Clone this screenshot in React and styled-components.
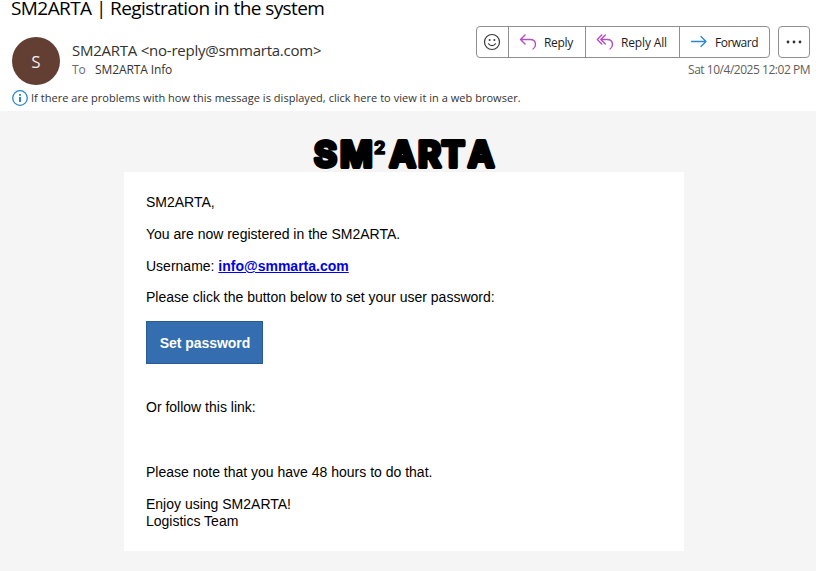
import React from "react";
import styled, { createGlobalStyle } from "styled-components";

const GlobalStyle = createGlobalStyle`
  * { box-sizing: border-box; }
  body { margin: 0; background: #fff; }
`;

const Window = styled.div`
  display: flex;
  flex-direction: column;
  width: 816px;
  height: 571px;
  font-family: "Open Sans", "Noto Sans", sans-serif;
  color: #333231;
  background: #fff;
`;

const Subject = styled.h1`
  margin: 0;
  height: 26px;
  padding-left: 11px;
  font-size: 19px;
  font-weight: 400;
  line-height: 16px;
  letter-spacing: -0.58px;
  white-space: nowrap;
  color: #000;
`;

const Header = styled.header`
  display: flex;
  height: 62px;
  padding: 0 6px 0 12px;
`;

const Avatar = styled.div`
  display: flex;
  align-items: center;
  justify-content: center;
  width: 48px;
  height: 48px;
  margin-top: 11px;
  border-radius: 50%;
  background: #633e32;
  color: #f1ecea;
  font-size: 17px;
  font-weight: 400;
`;

const Addresses = styled.div`
  flex: 1;
  padding: 14px 0 0 12px;
`;

const Sender = styled.div`
  font-size: 15px;
  line-height: 21px;
  letter-spacing: -0.24px;
  white-space: nowrap;
`;

const Recipient = styled.div`
  display: flex;
  gap: 9.5px;
  font-size: 12px;
  line-height: 18px;
  letter-spacing: -0.12px;
`;

const Muted = styled.span`
  color: #6b6a69;
`;

const HeaderEnd = styled.div`
  display: flex;
  flex-direction: column;
  align-items: flex-end;
`;

const Toolbar = styled.div`
  display: flex;
  gap: 8px;
`;

const ButtonGroup = styled.div`
  display: flex;
  width: ${(p) => p.$width}px;
  height: 32px;
  border: 1px solid #8f8f8f;
  border-radius: 4px;
  background: #fff;
`;

const ToolButton = styled.button`
  display: flex;
  align-items: center;
  gap: ${(p) => p.$gap || 0}px;
  width: ${(p) => p.$width}px;
  padding: 0 0 0 ${(p) => p.$inset}px;
  border: 0;
  background: none;
  color: #1c1c1c;
  font: 400 12px "Open Sans", "Noto Sans", sans-serif;
  letter-spacing: ${(p) => p.$tracking || 0}px;
  white-space: nowrap;
  & + & { border-left: 1px solid #8f8f8f; }
  svg { flex: none; }
`;

const SentDate = styled.time`
  margin-top: 3px;
  font-size: 12px;
  line-height: 18px;
  letter-spacing: -0.47px;
  color: #5f5e5d;
`;

const InfoBar = styled.div`
  display: flex;
  align-items: center;
  gap: 3px;
  height: 23px;
  padding: 0 0 3px 12px;
  font-size: 11px;
  letter-spacing: 0.03px;
  white-space: nowrap;
`;

const InfoText = styled.span`
  padding-bottom: 2px;
`;

const Message = styled.main`
  flex: 1;
  display: flex;
  flex-direction: column;
  align-items: center;
  padding: 26px 8px 0 0;
  background: #f5f5f5;
  font-family: "Liberation Sans", Arial, sans-serif;
  font-size: 14px;
  line-height: 17px;
  color: #000;
`;

const Logo = styled.svg`
  display: block;
  flex: none;
  overflow: visible;
  font-family: Inter, sans-serif;
  font-weight: 700;
`;

const Card = styled.section`
  width: 560px;
  height: 379px;
  padding: 22px;
  background: #fff;
`;

const Paragraph = styled.p`
  margin: 0 0 ${(p) => p.$after ?? 15}px;
`;

const MailLink = styled.a`
  font-weight: 700;
  color: #0000ee;
`;

const PasswordButton = styled.a`
  display: flex;
  align-items: center;
  justify-content: center;
  width: 117px;
  height: 43px;
  margin-bottom: 35px;
  padding: 2px 0 0 1px;
  border: 1px solid #2a5a98;
  background: #346db0;
  color: #fff;
  font-weight: 700;
  letter-spacing: -0.06px;
  text-decoration: none;
`;

const Smile = () => (
  <svg width="18" height="18" viewBox="0 0 18 18" fill="none" stroke="#3a3a3a" strokeWidth="1.2">
    <circle cx="9" cy="9" r="7.5" />
    <path d="M5.5 10.8c1.5 2.4 5.5 2.4 7 0" strokeLinecap="round" />
    <circle cx="6.6" cy="7" r="1" fill="#3a3a3a" stroke="none" />
    <circle cx="11.4" cy="7" r="1" fill="#3a3a3a" stroke="none" />
  </svg>
);

const ReplyIcon = () => (
  <svg width="18" height="18" viewBox="0 0 18 18" fill="none" stroke="#b14fc0" strokeWidth="1.4" strokeLinecap="round" strokeLinejoin="round">
    <path d="M6 2L1.5 6.5L6 11M1.5 6.5H11C14.4 6.5 16.5 8.6 16.5 11.5C16.5 13.5 15.6 15 14 16" />
  </svg>
);

const ReplyAllIcon = () => (
  <svg width="18" height="18" viewBox="0 0 18 18" fill="none" stroke="#b14fc0" strokeWidth="1.4" strokeLinecap="round" strokeLinejoin="round">
    <path d="M5.8 2L1.3 6.5L5.8 11M9.3 2L4.8 6.5L9.3 11M4.8 6.5H11C14.4 6.5 16.5 8.6 16.5 11.5C16.5 13.5 15.6 15 14 16" />
  </svg>
);

const ForwardIcon = () => (
  <svg width="18" height="18" viewBox="0 0 18 18" fill="none" stroke="#2b88d0" strokeWidth="1.3" strokeLinecap="round" strokeLinejoin="round">
    <path d="M1.5 8.5H16M11 3.5L16 8.5L11 13.5" />
  </svg>
);

const MoreIcon = () => (
  <svg width="16" height="4" viewBox="0 0 16 4" fill="#333">
    <circle cx="2" cy="2" r="1.4" />
    <circle cx="8" cy="2" r="1.4" />
    <circle cx="14" cy="2" r="1.4" />
  </svg>
);

const InfoIcon = () => (
  <svg width="16" height="16" viewBox="0 0 16 16" fill="none" stroke="#2b88c8">
    <circle cx="8" cy="8" r="7.3" strokeWidth="1.3" />
    <path d="M8 7v5M8 4v1.8" strokeWidth="2" />
  </svg>
);

const Wordmark = () => (
  <Logo width="184" height="35" viewBox="0 0 184 35" stroke="#000" strokeWidth="4" strokeLinejoin="round">
    <text x="2 28" y="30" fontSize="35">SM</text>
    <text x="62" y="17" fontSize="18" strokeWidth="1.6">2</text>
    <text x="77.5 106 129.5 156" y="30" fontSize="35">ARTA</text>
  </Logo>
);

export default function App() {
  return (
    <Window>
      <GlobalStyle />
      <Subject>SM2ARTA | Registration in the system</Subject>
      <Header>
        <Avatar>S</Avatar>
        <Addresses>
          <Sender>SM2ARTA &lt;no-reply@smmarta.com&gt;</Sender>
          <Recipient>
            <Muted>To</Muted>
            <span>SM2ARTA Info</span>
          </Recipient>
        </Addresses>
        <HeaderEnd>
          <Toolbar>
            <ButtonGroup $width={294}>
              <ToolButton $width={31} $inset={6} aria-label="React"><Smile /></ToolButton>
              <ToolButton $width={77} $inset={10} $gap={7} $tracking={-0.3}><ReplyIcon />Reply</ToolButton>
              <ToolButton $width={94} $inset={10} $gap={7} $tracking={-0.15}><ReplyAllIcon />Reply All</ToolButton>
              <ToolButton $width={90} $inset={10} $gap={7} $tracking={-0.5}><ForwardIcon />Forward</ToolButton>
            </ButtonGroup>
            <ButtonGroup $width={32}>
              <ToolButton $width={30} $inset={7} aria-label="More actions"><MoreIcon /></ToolButton>
            </ButtonGroup>
          </Toolbar>
          <SentDate>Sat 10/4/2025 12:02 PM</SentDate>
        </HeaderEnd>
      </Header>
      <InfoBar>
        <InfoIcon />
        <InfoText>If there are problems with how this message is displayed, click here to view it in a web browser.</InfoText>
      </InfoBar>
      <Message>
        <Wordmark />
        <Card>
          <Paragraph>SM2ARTA,</Paragraph>
          <Paragraph>You are now registered in the SM2ARTA.</Paragraph>
          <Paragraph $after={14}>Username: <MailLink href="#">info@smmarta.com</MailLink></Paragraph>
          <Paragraph>Please click the button below to set your user password:</Paragraph>
          <PasswordButton href="#">Set password</PasswordButton>
          <Paragraph $after={48}>Or follow this link:</Paragraph>
          <Paragraph>Please note that you have 48 hours to do that.</Paragraph>
          <Paragraph>Enjoy using SM2ARTA!<br />Logistics Team</Paragraph>
        </Card>
      </Message>
    </Window>
  );
}
